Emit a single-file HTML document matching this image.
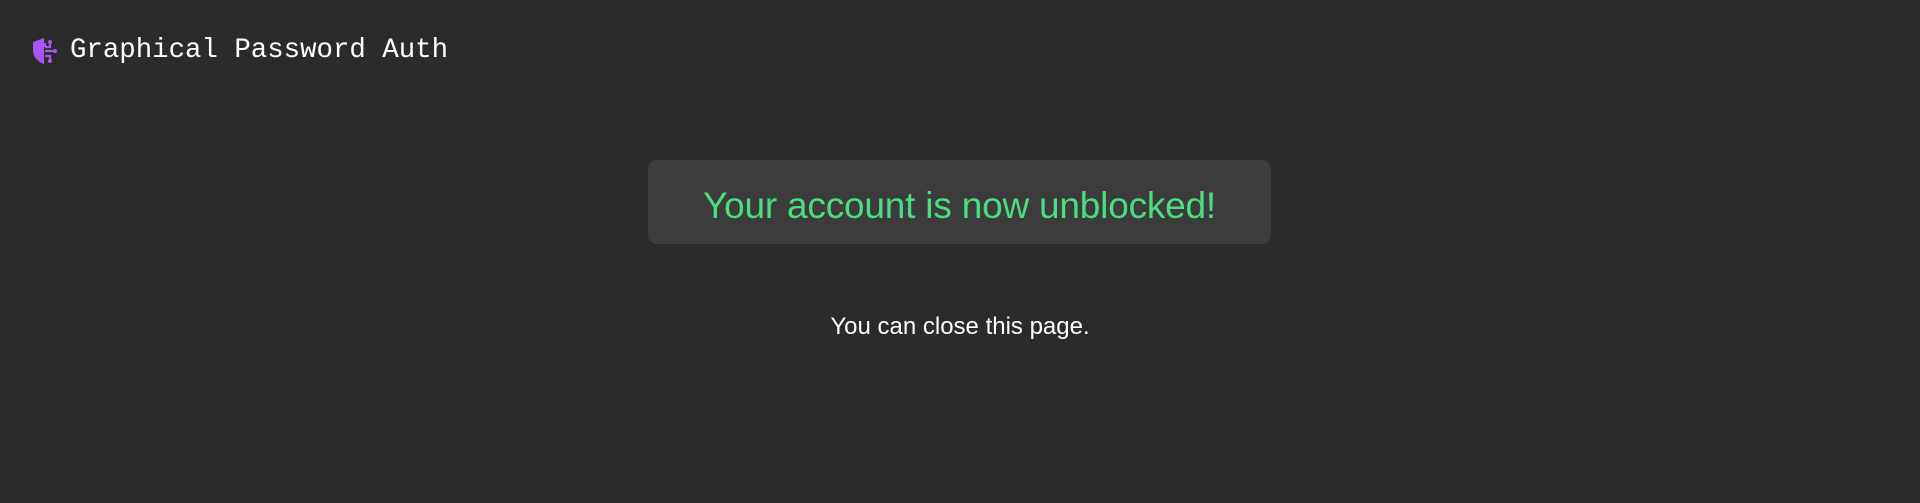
<!DOCTYPE html>
<html><head><meta charset="utf-8"><style>
html,body{margin:0;padding:0;background:#2b2b2b;width:1920px;height:503px;overflow:hidden;}
.hdr{position:absolute;left:30px;top:35px;display:flex;align-items:center;}
.hdr span{font-family:"Liberation Mono",monospace;font-size:27.4px;color:#fff;margin-left:12px;}
.box{position:absolute;left:648px;top:160px;width:623px;height:84px;background:#3c3c3c;border-radius:9px;display:flex;align-items:center;justify-content:center;}
.box div{font-family:"Liberation Sans",sans-serif;font-size:37px;color:#4ade80;letter-spacing:-0.2px;padding-top:7px;}
.sub{position:absolute;left:0;width:1920px;top:313px;text-align:center;font-family:"Liberation Sans",sans-serif;font-size:24px;color:#fff;}
</style></head><body>
<div class="hdr">
<svg width="28" height="28" viewBox="0 0 28 28"><path d="M14 1 L3 5 L3 13 C3 20 8 25 14 27 Z" fill="#a855f7"/><path d="M15 6 L15 10 M15 14 L24 14 M15 19 L20 19 L20 23 M15 10 L20 10 L20 6" stroke="#a855f7" stroke-width="2.2" fill="none"/><circle cx="20" cy="5" r="2" fill="#a855f7"/><circle cx="25" cy="14" r="2" fill="#a855f7"/><circle cx="20" cy="24" r="2" fill="#a855f7"/></svg>
<span>Graphical Password Auth</span>
</div>
<div class="box"><div>Your account is now unblocked!</div></div>
<div class="sub">You can close this page.</div>
</body></html>
